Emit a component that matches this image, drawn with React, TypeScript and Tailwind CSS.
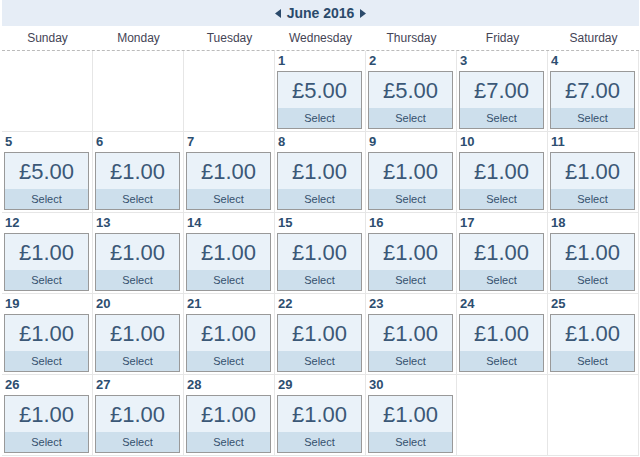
import React from "react";

const days = ["Sunday", "Monday", "Tuesday", "Wednesday", "Thursday", "Friday", "Saturday"];

function price(d: number): string {
  if (d === 1 || d === 2 || d === 5) return "£5.00";
  if (d === 3 || d === 4) return "£7.00";
  return "£1.00";
}

export default function App() {
  const cells: (number | null)[] = [];
  for (let i = 0; i < 3; i++) cells.push(null);
  for (let d = 1; d <= 30; d++) cells.push(d);
  while (cells.length < 35) cells.push(null);

  return (
    <div className="w-[640px] h-[457px] bg-white font-['Liberation_Sans',Arial,sans-serif] overflow-hidden">
      <div className="ml-[2px] w-[637px]">
        <div className="h-[26px] bg-[#e6edf6] flex items-center justify-center gap-[5px] text-[14px] font-bold text-[#2b4a6b]">
          <svg width="6" height="9" viewBox="0 0 6 9" className="mr-[1px]">
            <polygon points="6,0 6,9 0,4.5" fill="#2b4a6b" />
          </svg>
          <span className="leading-none">June 2016</span>
          <svg width="6" height="9" viewBox="0 0 6 9" className="ml-[1px]">
            <polygon points="0,0 0,9 6,4.5" fill="#2b4a6b" />
          </svg>
        </div>
        <div className="grid grid-cols-[repeat(7,91px)] h-[25px] border-b border-dashed border-[#bbbbbb]">
          {days.map((d) => (
            <div key={d} className="flex items-center justify-center text-[12px] text-[#444455]">
              {d}
            </div>
          ))}
        </div>
        <div className="grid grid-cols-[repeat(7,91px)]">
          {cells.map((d, i) => (
            <div key={i} className="h-[81px] border-r border-b border-[#e6e6e6] pt-[2px] pl-[2px]">
              {d !== null && (
                <>
                  <div className="text-[13px] leading-[16px] font-bold text-[#2d4e70] pl-[1px]">{d}</div>
                  <div className="mt-[2px] w-[85px] h-[58px] border border-[#999999] flex flex-col">
                    <div className="flex-1 bg-[#eaf2f9] flex items-center justify-center text-[22px] text-[#3b5877]">
                      {price(d)}
                    </div>
                    <div className="h-[20px] bg-[#cddfec] flex items-center justify-center text-[11px] text-[#34506c]">
                      Select
                    </div>
                  </div>
                </>
              )}
            </div>
          ))}
        </div>
      </div>
    </div>
  );
}
